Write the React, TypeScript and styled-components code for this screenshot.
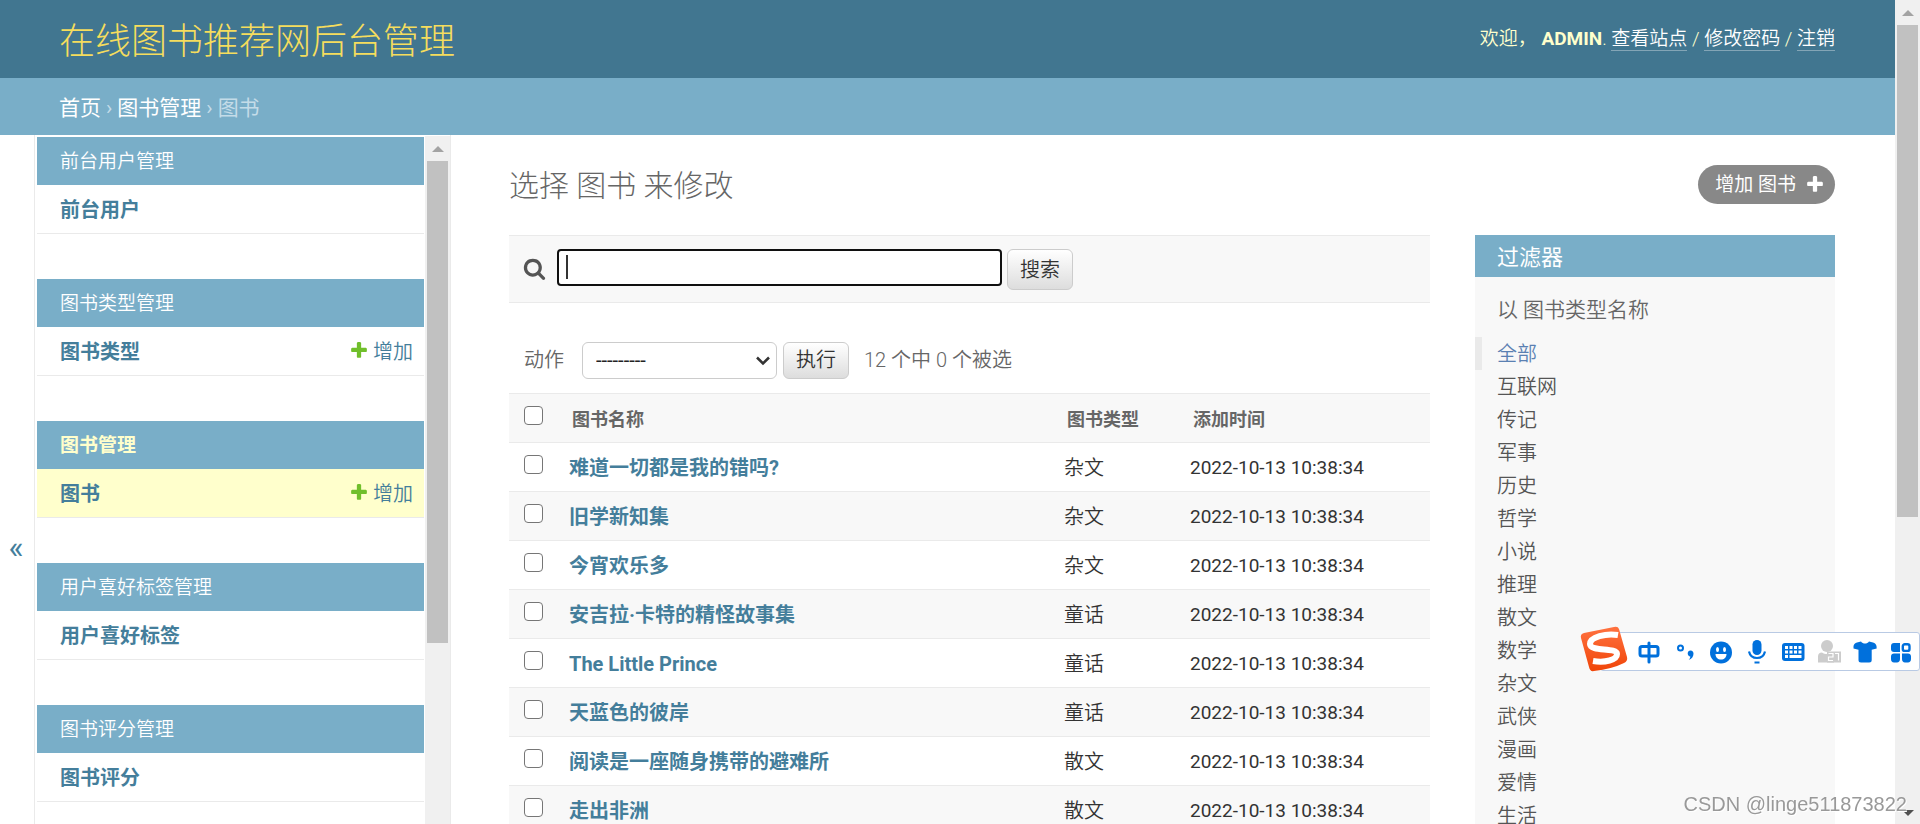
import React from "react";
import styled, { createGlobalStyle, css } from "styled-components";

const GlobalStyle = createGlobalStyle`
  *, *::before, *::after { box-sizing: border-box; }
  body {
    margin: 0;
    overflow: hidden;
    background: #fff;
    color: #333;
    font-family: Roboto, "Noto Sans CJK SC", "Liberation Sans", sans-serif;
    font-size: 19px;
    line-height: 24px;
  }
  h1, h2, h3, p, ul { margin: 0; padding: 0; font-weight: 400; }
  ul { list-style: none; }
  a { color: #447e9b; text-decoration: none; }
  button, input, select { font-family: inherit; margin: 0; }
`;

const Shell = styled.div`
  display: flex;
  height: 100vh;
  overflow: hidden;
`;

const Page = styled.div`
  flex: 1;
  min-width: 0;
  display: flex;
  flex-direction: column;
`;

const Header = styled.header`
  flex: none;
  display: flex;
  align-items: center;
  justify-content: space-between;
  height: 78px;
  padding: 0 60px 0 59px;
  background: #417690;
  color: #ffc;
`;

const SiteName = styled.h1`
  font-size: 36px;
  line-height: 44px;
  font-weight: 300;
  padding-top: 6px;
  a { color: #f5dd5d; }
`;

const UserTools = styled.div`
  font-weight: 350;
  white-space: pre;
  strong { font-weight: 700; }
  a {
    color: #fff;
    border-bottom: 1px solid rgba(255, 255, 255, 0.35);
  }
`;

const Breadcrumbs = styled.nav`
  flex: none;
  display: flex;
  align-items: center;
  gap: 5px;
  height: 57px;
  padding: 2px 60px 0 59px;
  background: #79aec8;
  color: #c4dce8;
  font-size: 21px;
  a { color: #fff; }
`;

const Body = styled.div`
  flex: 1;
  min-height: 0;
  display: flex;
`;

const NavToggle = styled.button`
  flex: none;
  width: 35px;
  padding: 134px 2px 0 0;
  border: 0;
  border-right: 1px solid #eaeaea;
  background: #fff;
  color: #447e9b;
  font-size: 32px;
`;

const Sidebar = styled.nav`
  flex: none;
  display: flex;
  width: 416px;
  padding: 1px 0 0 2px;
  border-right: 1px solid #eaeaea;
`;

const AppList = styled.div`
  flex: 1;
  display: flex;
  flex-direction: column;
  gap: 45px;
  padding: 1px 1px 0 0;
  overflow: hidden;
`;

const AppGroup = styled.section`
  flex: none;
`;

const AppCaption = styled.h2<{ $current?: boolean }>`
  height: 48px;
  padding: 1px 23px 0;
  background: #79aec8;
  font-size: 19px;
  line-height: 48px;
  a {
    color: ${(p) => (p.$current ? "#ffc" : "#fff")};
    font-weight: ${(p) => (p.$current ? 700 : 350)};
  }
`;

const ModelRow = styled.div<{ $current?: boolean }>`
  display: flex;
  align-items: center;
  justify-content: space-between;
  height: 49px;
  padding: 1px 11px 0 23px;
  border-bottom: 1px solid #eaeaea;
  background: ${(p) => (p.$current ? "#ffc" : "#fff")};
  font-size: 20px;
`;

const ModelLink = styled.a`
  font-weight: 700;
`;

const AddLink = styled.a`
  display: flex;
  align-items: center;
  gap: 4px;
  font-weight: 350;
  svg { margin-bottom: 3px; }
`;

const Content = styled.main`
  flex: 1;
  min-width: 0;
  padding: 30px 60px 0 58px;
  overflow: hidden;
`;

const TitleRow = styled.div`
  display: flex;
  align-items: center;
  justify-content: space-between;
  height: 39px;
  margin-bottom: 31px;
`;

const PageTitle = styled.h1`
  font-size: 30px;
  line-height: 39px;
  font-weight: 300;
  color: #666;
  padding-top: 2px;
`;

const AddButton = styled.a`
  display: flex;
  align-items: center;
  gap: 9px;
  height: 39px;
  padding: 0 10px 0 17px;
  border-radius: 20px;
  background: #888;
  color: #fff;
  svg { margin-bottom: 2px; }
`;

const Columns = styled.div`
  display: flex;
  align-items: flex-start;
  gap: 45px;
`;

const ListPane = styled.div`
  flex: 1;
  min-width: 0;
`;

const SearchForm = styled.form`
  display: flex;
  align-items: flex-start;
  height: 68px;
  padding: 13px 14px;
  border-top: 1px solid #eaeaea;
  border-bottom: 1px solid #eaeaea;
  background: #f8f8f8;
`;

const SearchLabel = styled.label`
  display: flex;
  margin: 8px 11px 0 0;
`;

const SearchBox = styled.div`
  position: relative;
  margin-right: 5px;
`;

const SearchInput = styled.input`
  display: block;
  width: 445px;
  height: 37px;
  padding: 0 9px;
  border: 2px solid #101010;
  border-radius: 4px;
  background: #fff;
  color: #333;
  font-size: 20px;
  outline: none;
`;

const Caret = styled.span`
  position: absolute;
  left: 9px;
  top: 6px;
  width: 2px;
  height: 24px;
  background: #333;
`;

const PushButton = styled.button<{ $tall?: boolean }>`
  width: 66px;
  height: ${(p) => (p.$tall ? 41 : 37)}px;
  padding: 0;
  border: 1px solid #ccc;
  border-radius: 6px;
  background: linear-gradient(#fff, #ddd);
  color: #333;
  font-size: 20px;
  font-weight: 350;
  line-height: 24px;
`;

const Actions = styled.div`
  display: flex;
  align-items: center;
  height: 90px;
  padding: 24px 15px 0;
  color: #666;
  font-size: 20px;
  font-weight: 350;
`;

const ActionLabel = styled.label`
  display: flex;
  align-items: center;
  gap: 18px;
`;

const SelectBox = styled.span`
  position: relative;
  display: block;
  margin-right: 6px;
  svg {
    position: absolute;
    right: 7px;
    top: 14px;
    pointer-events: none;
  }
`;

const ActionSelect = styled.select`
  appearance: none;
  display: block;
  width: 195px;
  height: 37px;
  padding: 0 13px;
  border: 1px solid #ccc;
  border-radius: 6px;
  background: #fff;
  color: #222;
  font-size: 20px;
`;

const Counter = styled.span`
  margin-left: 15px;
`;

const ResultTable = styled.table`
  width: 100%;
  table-layout: fixed;
  border-collapse: separate;
  border-spacing: 0;
  border-top: 1px solid #eaeaea;
`;

const cell = css`
  height: 49px;
  padding: 1px 11px 0;
  border-bottom: 1px solid #eaeaea;
  text-align: left;
  white-space: nowrap;
`;

const HeadCell = styled.th<{ $width?: number }>`
  ${cell}
  ${(p) => p.$width && `width: ${p.$width}px;`}
  padding: 3px 14px 0;
  background: #f8f8f8;
  color: #666;
  font-size: 18px;
  font-weight: 700;
`;

const BookRow = styled.tr`
  background: #fff;
  &:nth-child(even) { background: #f8f8f8; }
`;

const BookName = styled.th`
  ${cell}
  font-size: 20px;
  font-weight: 700;
`;

const BookCell = styled.td<{ $kind?: boolean }>`
  ${cell}
  font-size: ${(p) => (p.$kind ? 20 : 19)}px;
  font-weight: ${(p) => (p.$kind ? 350 : 400)};
`;

const CheckHead = styled(HeadCell)`
  padding: 0 0 5px 15px;
  line-height: 0;
`;

const CheckCell = styled(BookCell)`
  padding: 0 0 5px 15px;
  line-height: 0;
`;

const Check = styled.input`
  appearance: none;
  width: 19px;
  height: 19px;
  border: 1px solid #767676;
  border-radius: 4px;
  background: #fff;
`;

const FilterPanel = styled.aside`
  flex: none;
  width: 360px;
  background: #f8f8f8;
`;

const FilterTitle = styled.h2`
  height: 42px;
  padding: 2px 22px 0;
  background: #79aec8;
  color: #fff;
  font-size: 22px;
  line-height: 42px;
`;

const FilterGroup = styled.h3`
  padding: 21px 22px 15px;
  color: #666;
  font-size: 21px;
  font-weight: 350;
`;

const FilterItem = styled.li<{ $selected?: boolean }>`
  height: 33px;
  padding-left: ${(p) => (p.$selected ? 15 : 22)}px;
  border-left: ${(p) => (p.$selected ? "7px solid #eaeaea" : "0")};
  font-size: 20px;
  line-height: 35px;
  font-weight: 350;
  a { color: ${(p) => (p.$selected ? "#5b80b2" : "#555")}; }
`;

const ScrollTrack = styled.div`
  flex: none;
  display: flex;
  flex-direction: column;
  align-items: center;
  justify-content: space-between;
  width: 25px;
  padding-bottom: 8px;
  background: #f0f0f0;
`;

const ScrollHead = styled.div<{ $end: string }>`
  display: flex;
  flex-direction: column;
  align-items: center;
  width: 21px;
  height: ${(p) => p.$end};
`;

const ScrollThumb = styled.div`
  flex: 1;
  width: 21px;
  margin-top: 9px;
  background: #c1c1c1;
`;

const ArrowUp = styled.div`
  margin-top: 10px;
  border: 6px solid transparent;
  border-top: 0;
  border-bottom-color: #a3a3a3;
`;

const ArrowDown = styled.div`
  border: 6px solid transparent;
  border-bottom: 0;
  border-top-color: #505050;
`;

const ImeBar = styled.div`
  position: fixed;
  right: 0;
  bottom: 153px;
  display: flex;
  align-items: center;
  gap: 12px;
  height: 39px;
  padding: 0 6px 0 36px;
  border: 1px solid #b9cae4;
  border-radius: 3px;
  background: #fff;
`;

const ImeLogo = styled.svg`
  position: absolute;
  left: -21px;
  top: -8px;
`;

const ImeButton = styled.button`
  display: block;
  width: 24px;
  height: 24px;
  padding: 0;
  border: 0;
  background: none;
  svg { display: block; }
`;

const Watermark = styled.div`
  position: fixed;
  right: 13px;
  bottom: 8px;
  color: #999;
  font-family: "Liberation Sans", sans-serif;
  font-size: 20px;
  text-shadow: 1px 1px 0 #fff;
`;

const PlusIcon = ({ color }: { color: string }) => (
  <svg width="20" height="20" viewBox="0 0 1792 1792" fill={color} aria-hidden="true">
    <path d="M1600 796v192q0 40-28 68t-68 28h-416v416q0 40-28 68t-68 28h-192q-40 0-68-28t-28-68v-416h-416q-40 0-68-28t-28-68v-192q0-40 28-68t68-28h416v-416q0-40 28-68t68-28h192q40 0 68 28t28 68v416h416q40 0 68 28t28 68z" />
  </svg>
);

const SearchIcon = () => (
  <svg width="23" height="23" viewBox="0 0 1792 1792" fill="#555" aria-hidden="true">
    <path d="M1216 832q0-185-131.500-316.500t-316.500-131.500-316.500 131.500-131.500 316.500 131.500 316.500 316.500 131.500 316.500-131.500 131.500-316.500zm512 832q0 52-38 90t-90 38q-54 0-90-38l-343-342q-179 124-399 124-143 0-273.500-55.500t-225-150-150-225-55.500-273.500 55.500-273.500 150-225 225-150 273.500-55.500 273.500 55.500 225 150 150 225 55.500 273.500q0 220-124 399l343 343q37 37 37 90z" />
  </svg>
);

const apps = [
  { caption: "前台用户管理", model: "前台用户" },
  { caption: "图书类型管理", model: "图书类型", add: true },
  { caption: "图书管理", model: "图书", add: true, current: true },
  { caption: "用户喜好标签管理", model: "用户喜好标签" },
  { caption: "图书评分管理", model: "图书评分" },
];

const books = [
  ["难道一切都是我的错吗?", "杂文"],
  ["旧学新知集", "杂文"],
  ["今宵欢乐多", "杂文"],
  ["安吉拉·卡特的精怪故事集", "童话"],
  ["The Little Prince", "童话"],
  ["天蓝色的彼岸", "童话"],
  ["阅读是一座随身携带的避难所", "散文"],
  ["走出非洲", "散文"],
];

const filters = [
  "全部", "互联网", "传记", "军事", "历史", "哲学", "小说", "推理",
  "散文", "数学", "杂文", "武侠", "漫画", "爱情", "生活",
];

const BLUE = "#0070dc";

const imeIcons = [
  {
    label: "中文",
    art: (
      <g fill="none" stroke={BLUE} strokeWidth="3" strokeLinecap="round">
        <rect x="3" y="6.500" width="18" height="9.500" rx="2" />
        <path d="M12 3v19" />
      </g>
    ),
  },
  {
    label: "标点",
    art: (
      <g>
        <circle cx="7.500" cy="8" r="2.500" fill="none" stroke={BLUE} strokeWidth="2" />
        <path d="M17.500 10.500c2 0 3 1.300 3 3.200 0 3-2 5.300-4.800 6.300 1-1.200 1.600-2.200 1.600-3.600-1.500-.2-2.600-1.400-2.600-3 0-1.700 1.200-2.900 2.800-2.900z" fill={BLUE} />
      </g>
    ),
  },
  {
    label: "表情",
    art: (
      <g>
        <circle cx="12" cy="12.500" r="11" fill={BLUE} />
        <ellipse cx="8.500" cy="9.500" rx="1.500" ry="2.500" fill="#fff" />
        <ellipse cx="15.500" cy="9.500" rx="1.500" ry="2.500" fill="#fff" />
        <path d="M6.500 14h11c0 3.500-2.300 5.500-5.500 5.500s-5.500-2-5.500-5.500z" fill="#fff" />
      </g>
    ),
  },
  {
    label: "语音",
    art: (
      <g>
        <rect x="7.500" y="0" width="9" height="15" rx="4.500" fill={BLUE} />
        <path d="M4 11.500c1 4.500 4 6.500 8 6.500s7-2 8-6.500M9.500 22.500h5" fill="none" stroke={BLUE} strokeWidth="2.200" />
      </g>
    ),
  },
  {
    label: "键盘",
    art: (
      <g>
        <rect x="1" y="3" width="22.500" height="18" rx="3" fill={BLUE} />
        <path d="M4 6h3v3H4zM8.500 6h3v3h-3zM13 6h3v3h-3zM17.500 6h3v3h-3zM4 10.500h3v3H4zM8.500 10.500h3v3h-3zM13 10.500h3v3h-3zM17.500 10.500h3v3h-3zM4 15h3v3H4zM8.500 15h12v3h-12z" fill="#fff" />
      </g>
    ),
  },
  {
    label: "用户",
    art: (
      <g>
        <circle cx="10" cy="6" r="6" fill="#ccc" />
        <path d="M1 22.500v-6c0-2.500 1.500-4 4-4 3 2 7 2 10 0h2v10z" fill="#ccc" />
        <rect x="10" y="11.500" width="14" height="11" fill="#ccc" />
        <path d="M11.500 13.500h4.500v3.500h-4.500v3.500h4.500M18 13.500h3.500v7" fill="none" stroke="#fff" strokeWidth="1.200" />
      </g>
    ),
  },
  {
    label: "皮肤",
    art: <path d="M8 1.500c2 2.700 6 2.700 8 0l4 1c2 .5 3 1.500 3.500 3.500l.2 2.500-5 1.200V20c0 1.700-.8 2.500-2.500 2.500H8c-1.700 0-2.500-.8-2.500-2.500V9.700l-5-1.200V6C1 4 2 3 4 2.500z" fill={BLUE} />,
  },
  {
    label: "工具箱",
    art: (
      <g fill={BLUE}>
        <path d="M5 3h6v9H5c-2 0-3-1.200-3-3V6c0-1.800 1.200-3 3-3z" />
        <rect x="13.800" y="4.200" width="6.700" height="6.700" rx="2" fill="none" stroke={BLUE} strokeWidth="2.400" />
        <path d="M5 13.500h6v5.500c0 2-1.200 3.500-3 3.500H5c-2 0-3-1.500-3-3.500v-2.500c0-1.800 1.200-3 3-3zM13 13.500h6c1.800 0 3 1.200 3 3V19c0 2-1.200 3.500-3 3.500h-3c-1.800 0-3-1.500-3-3.500z" />
      </g>
    ),
  },
];

const Scrollbar = ({ end, down }: { end: string; down?: boolean }) => (
  <ScrollTrack aria-hidden="true">
    <ScrollHead $end={end}>
      <ArrowUp />
      <ScrollThumb />
    </ScrollHead>
    {down && <ArrowDown />}
  </ScrollTrack>
);

export default function App() {
  return (
    <>
      <GlobalStyle />
      <Shell>
        <Page>
          <Header>
            <SiteName><a href="#">在线图书推荐网后台管理</a></SiteName>
            <UserTools>
              欢迎， <strong>ADMIN</strong>. <a href="#">查看站点</a> / <a href="#">修改密码</a> / <a href="#">注销</a>
            </UserTools>
          </Header>
          <Breadcrumbs>
            <a href="#">首页</a><span>›</span><a href="#">图书管理</a><span>›</span><span>图书</span>
          </Breadcrumbs>
          <Body>
            <NavToggle type="button" aria-label="切换导航">«</NavToggle>
            <Sidebar>
              <AppList>
                {apps.map((app) => (
                  <AppGroup key={app.caption}>
                    <AppCaption $current={app.current}><a href="#">{app.caption}</a></AppCaption>
                    <ModelRow $current={app.current}>
                      <ModelLink href="#">{app.model}</ModelLink>
                      {app.add && <AddLink href="#"><PlusIcon color="#70bf2b" />增加</AddLink>}
                    </ModelRow>
                  </AppGroup>
                ))}
              </AppList>
              <Scrollbar end="507px" />
            </Sidebar>
            <Content>
              <TitleRow>
                <PageTitle>选择 图书 来修改</PageTitle>
                <AddButton href="#">增加 图书<PlusIcon color="#fff" /></AddButton>
              </TitleRow>
              <Columns>
                <ListPane>
                  <SearchForm onSubmit={(e) => e.preventDefault()}>
                    <SearchLabel htmlFor="searchbar" aria-label="搜索"><SearchIcon /></SearchLabel>
                    <SearchBox>
                      <SearchInput id="searchbar" type="text" />
                      <Caret />
                    </SearchBox>
                    <PushButton $tall type="submit">搜索</PushButton>
                  </SearchForm>
                  <Actions>
                    <ActionLabel>
                      动作
                      <SelectBox>
                        <ActionSelect><option>---------</option></ActionSelect>
                        <svg width="14" height="10" viewBox="0 0 14 10" fill="none" stroke="#333" strokeWidth="2.500">
                          <path d="M1 1.500l6 6 6-6" />
                        </svg>
                      </SelectBox>
                    </ActionLabel>
                    <PushButton type="button">执行</PushButton>
                    <Counter>12 个中 0 个被选</Counter>
                  </Actions>
                  <ResultTable>
                    <thead>
                      <tr>
                        <CheckHead $width={49}><Check type="checkbox" aria-label="全选" /></CheckHead>
                        <HeadCell>图书名称</HeadCell>
                        <HeadCell $width={126}>图书类型</HeadCell>
                        <HeadCell $width={251}>添加时间</HeadCell>
                      </tr>
                    </thead>
                    <tbody>
                      {books.map(([name, kind]) => (
                        <BookRow key={name}>
                          <CheckCell><Check type="checkbox" aria-label={name} /></CheckCell>
                          <BookName scope="row"><a href="#">{name}</a></BookName>
                          <BookCell $kind>{kind}</BookCell>
                          <BookCell>2022-10-13 10:38:34</BookCell>
                        </BookRow>
                      ))}
                    </tbody>
                  </ResultTable>
                </ListPane>
                <FilterPanel>
                  <FilterTitle>过滤器</FilterTitle>
                  <FilterGroup>以 图书类型名称</FilterGroup>
                  <ul>
                    {filters.map((name, i) => (
                      <FilterItem key={name} $selected={i === 0}><a href="#">{name}</a></FilterItem>
                    ))}
                  </ul>
                </FilterPanel>
              </Columns>
            </Content>
          </Body>
        </Page>
        <Scrollbar end="517px" down />
      </Shell>
      <ImeBar>
        <ImeLogo width="50" height="48" viewBox="0 0 50 48" aria-hidden="true">
          <defs>
            <linearGradient id="ime" x1="0" y1="0" x2="0" y2="1">
              <stop offset="0" stopColor="#ff7240" />
              <stop offset="1" stopColor="#f04508" />
            </linearGradient>
          </defs>
          <path d="M4 8L34 2q4-1 5 2l8 28q1 4-3 6-12 6-30 8-4 1-5-4L1 13q-1-4 3-5z" fill="url(#ime)" />
          <path d="M38 10C26 8 10 12 10 19c0 8 27 3 27 10 0 6-12 9-24 7" fill="none" stroke="#fff" strokeWidth="6" />
        </ImeLogo>
        {imeIcons.map((icon) => (
          <ImeButton key={icon.label} type="button" aria-label={icon.label}>
            <svg width="24" height="24" viewBox="0 0 24 24">{icon.art}</svg>
          </ImeButton>
        ))}
      </ImeBar>
      <Watermark>CSDN @linge511873822</Watermark>
    </>
  );
}
